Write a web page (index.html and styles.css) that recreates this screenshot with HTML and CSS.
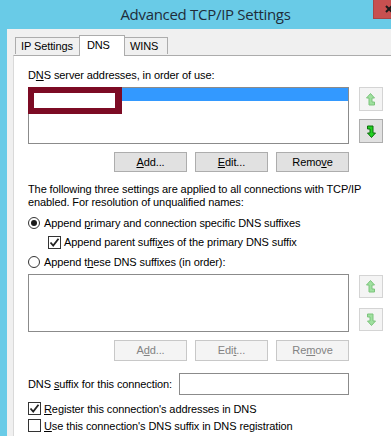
FILE: index.html
```html
<!DOCTYPE html>
<html>
<head>
<meta charset="utf-8">
<title>Advanced TCP/IP Settings</title>
<link rel="stylesheet" href="styles.css">
</head>
<body>
<div class="window">
  <div class="titlebar">
    <div class="title">Advanced TCP/IP Settings</div>
    <div class="close"><svg width="18" height="18" viewBox="0 0 18 18"><path d="M12 6 L18 12 M18 6 L12 12" stroke="#1a1a1a" stroke-width="2"/></svg></div>
  </div>
  <div class="frame">
    <div class="tabs">
      <div class="tab first-tab">IP Settings</div>
      <div class="tab active">DNS</div>
      <div class="tab last-tab">WINS</div>
    </div>
    <div class="pane">
      <div class="label first">D<u>N</u>S server addresses, in order of use:</div>
      <div class="list-row">
        <div class="listbox">
          <div class="item selected"></div>
          <div class="redact"></div>
        </div>
        <div class="arrows">
          <div class="arrow-btn disabled">
            <svg width="10" height="13" viewBox="0 0 10 13"><path d="M4.5 0.5 L8.5 5 L6 5 L6 9 L8.5 9 L8.5 12 L3 12 L3 5 L0.5 5 Z" fill="#9fe09f" stroke="#7cc47c" stroke-width="1"/></svg>
          </div>
          <div class="arrow-btn">
            <svg width="10" height="13" viewBox="0 0 10 13"><path d="M5.5 12.5 L1.5 8 L4 8 L4 4 L1.5 4 L1.5 1 L7 1 L7 8 L9.5 8 Z" fill="#22d122" stroke="#0d6e0d" stroke-width="1"/></svg>
          </div>
        </div>
      </div>
      <div class="btn-row">
        <div class="btn"><u>A</u>dd...</div>
        <div class="btn"><u>E</u>dit...</div>
        <div class="btn">Remo<u>v</u>e</div>
      </div>
      <p class="note">The following three settings are applied to all connections with TCP/IP enabled. For resolution of unqualified names:</p>
      <div class="opt radio-row r1">
        <span class="radio checked"></span>
        <span>Append <u>p</u>rimary and connection specific DNS suffixes</span>
      </div>
      <div class="opt sub">
        <span class="check checked"><svg width="11" height="11" viewBox="0 0 11 11"><path d="M1.5 5.5 L4.2 8.5 L9.5 1.8" fill="none" stroke="#222" stroke-width="1.8"/></svg></span>
        <span>Append parent suffi<u>x</u>es of the primary DNS suffix</span>
      </div>
      <div class="opt radio-row r2">
        <span class="radio"></span>
        <span>Append t<u>h</u>ese DNS suffixes (in order):</span>
      </div>
      <div class="list-row second">
        <div class="listbox tall"></div>
        <div class="arrows second">
          <div class="arrow-btn disabled">
            <svg width="10" height="13" viewBox="0 0 10 13"><path d="M4.5 0.5 L8.5 5 L6 5 L6 9 L8.5 9 L8.5 12 L3 12 L3 5 L0.5 5 Z" fill="#9fe09f" stroke="#7cc47c" stroke-width="1"/></svg>
          </div>
          <div class="arrow-btn disabled">
            <svg width="10" height="13" viewBox="0 0 10 13"><path d="M5.5 12.5 L1.5 8 L4 8 L4 4 L1.5 4 L1.5 1 L7 1 L7 8 L9.5 8 Z" fill="#9fe09f" stroke="#7cc47c" stroke-width="1"/></svg>
          </div>
        </div>
      </div>
      <div class="btn-row second">
        <div class="btn disabled">A<u>d</u>d...</div>
        <div class="btn disabled">Edi<u>t</u>...</div>
        <div class="btn disabled">Re<u>m</u>ove</div>
      </div>
      <div class="suffix-row">
        <span class="suffix-label">DNS <u>s</u>uffix for this connection:</span>
        <div class="input"></div>
      </div>
      <div class="opt bottom c1">
        <span class="check checked"><svg width="11" height="11" viewBox="0 0 11 11"><path d="M1.5 5.5 L4.2 8.5 L9.5 1.8" fill="none" stroke="#222" stroke-width="1.8"/></svg></span>
        <span><u>R</u>egister this connection's addresses in DNS</span>
      </div>
      <div class="opt bottom c2">
        <span class="check"></span>
        <span><u>U</u>se this connection's DNS suffix in DNS registration</span>
      </div>
    </div>
  </div>
</div>
</body>
</html>
```

FILE: styles.css
```css
html, body {
  margin: 0;
  padding: 0;
  width: 391px;
  height: 436px;
  overflow: hidden;
  background: #69cbe7;
}

.window {
  width: 391px;
  height: 436px;
  display: flex;
  flex-direction: column;
  background: #69cbe7;
  font-family: "Liberation Sans", Arial, sans-serif;
  font-size: 11px;
  letter-spacing: -0.1px;
  color: #000;
  overflow: hidden;
}

.titlebar {
  position: relative;
  height: 29px;
  flex: none;
}

.title {
  padding-left: 20px;
  text-align: center;
  font-family: "Open Sans", "Noto Sans", sans-serif;
  font-size: 15px;
  letter-spacing: -0.3px;
  line-height: 29px;
  color: #1f2d3a;
}

.close {
  position: absolute;
  top: 0;
  left: 373px;
  width: 18px;
  height: 19px;
  background: #c75050;
  border-left: 1px solid #a84545;
  border-bottom: 1px solid #a84545;
  box-sizing: border-box;
  overflow: hidden;
}

.close svg {
  display: block;
}

.frame {
  flex: 1;
  margin-left: 7px;
  background: #f0f0f0;
  padding: 7px 0 0 6px;
  display: flex;
  flex-direction: column;
}

.tabs {
  display: flex;
  align-items: flex-end;
  padding-left: 2px;
  height: 19px;
  position: relative;
  z-index: 1;
}

.tab {
  height: 17px;
  box-sizing: border-box;
  border: 1px solid #acacac;
  border-bottom: none;
  background: #f0f0f0;
  padding: 0 6px 0 5px;
  line-height: 16px;
  margin-bottom: 1px;
}

.tab.last-tab {
  padding: 0 9px 0 5px;
}

.tab + .tab {
  margin-left: -1px;
}

.tab.active {
  width: 46px;
  height: 21px;
  background: #fff;
  margin-bottom: -1px;
  padding: 1px 0 0 7px;
  line-height: 16px;
  position: relative;
}

.tab.active + .tab {
  margin-left: 0;
  border-left: none;
}

.pane {
  flex: 1;
  background: #fff;
  border-left: 1px solid #d9d9d9;
  border-top: 1px solid #acacac;
  padding: 0 0 0 14px;
}

.label {
  line-height: 13px;
  height: 13px;
}

.label.first {
  margin-top: 13px;
}

u {
  text-decoration: underline;
  text-underline-offset: 1px;
}

.list-row {
  display: flex;
  gap: 10px;
  margin-top: 5px;
}

.list-row.second {
  margin-top: 4px;
}

.listbox {
  position: relative;
  width: 321px;
  height: 57px;
  box-sizing: border-box;
  border: 1px solid #8b8b8b;
  background: #fff;
}

.listbox.tall {
  height: 58px;
}

.item.selected {
  height: 13px;
  background: #3399ff;
}

.redact {
  position: absolute;
  left: -1px;
  top: -1px;
  width: 94px;
  height: 27px;
  box-sizing: border-box;
  border: 6px solid #7c0b24;
  border-right-width: 7px;
  background: #fff;
}

.arrows {
  display: flex;
  flex-direction: column;
  gap: 8px;
}

.arrows.second {
  padding-top: 1px;
  gap: 10px;
}

.arrow-btn {
  width: 24px;
  height: 24px;
  box-sizing: border-box;
  border: 1px solid #adadad;
  background: #e1e1e1;
  display: flex;
  align-items: center;
  justify-content: center;
}

.arrows.second .arrow-btn {
  height: 23px;
}

.arrow-btn.disabled {
  background: #f4f4f4;
  border-color: #d4d4d4;
}

.btn-row {
  display: flex;
  justify-content: flex-end;
  gap: 8px;
  width: 321px;
  margin-top: 8px;
}

.btn {
  width: 73px;
  height: 20px;
  box-sizing: border-box;
  border: 1px solid #adadad;
  background: #e1e1e1;
  text-align: center;
  line-height: 18px;
}

.btn-row.second {
  margin-top: 8px;
}

.btn-row.second .btn {
  height: 21px;
  line-height: 19px;
}

.btn.disabled {
  background: #f4f4f4;
  border-color: #c8c8c8;
  color: #838383;
}

.note {
  margin: 11px 0 0 0;
  width: 345px;
  line-height: 13px;
}

.opt {
  display: flex;
  align-items: center;
  gap: 4px;
  height: 16px;
  line-height: 16px;
  white-space: nowrap;
}

.r1 { margin-top: 6px; }
.sub { margin-top: 3px; padding-left: 20px; gap: 3px; }
.r2 { margin-top: 4px; }

.radio {
  width: 12px;
  height: 12px;
  box-sizing: border-box;
  border: 1px solid #333;
  border-radius: 50%;
  background: #fff;
  display: flex;
  align-items: center;
  justify-content: center;
}

.radio.checked::after {
  content: "";
  width: 6px;
  height: 6px;
  border-radius: 50%;
  background: #1a1a1a;
}

.check {
  width: 13px;
  height: 13px;
  box-sizing: border-box;
  border: 1px solid #333;
  background: #fff;
  display: flex;
  align-items: center;
  justify-content: center;
}

.suffix-row {
  display: flex;
  align-items: center;
  margin-top: 12px;
  width: 321px;
}

.suffix-label {
  white-space: nowrap;
}

.input {
  margin-left: auto;
  width: 170px;
  flex: none;
  height: 22px;
  box-sizing: border-box;
  border: 1px solid #8b8b8b;
  background: #fff;
}

.bottom { height: 17px; gap: 3px; }
.c1 { margin-top: 5px; }
.c2 { margin-top: 0; }
```
